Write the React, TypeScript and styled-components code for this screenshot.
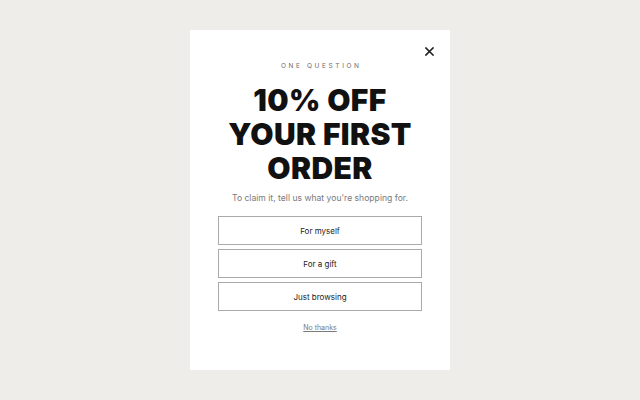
import styled, { createGlobalStyle } from 'styled-components';

const GlobalStyle = createGlobalStyle`
    html, body {
        margin: 0;
        padding: 0;
        background: #efedea;
        font-family: Inter, "Noto Sans", sans-serif;
    }
`

const Page = styled.div`
    width: 640px;
    height: 400px;
    display: flex;
    justify-content: center;
    align-items: center;
`

const Card = styled.div`
    position: relative;
    width: 260px;
    height: 340px;
    box-sizing: border-box;
    background: #ffffff;
    padding: 31px 28px 0;
    display: flex;
    flex-direction: column;
    align-items: center;
`

const Close = styled.button`
    position: absolute;
    top: 14px;
    right: 14px;
    width: 14px;
    height: 14px;
    padding: 0;
    border: none;
    background: none;
    display: flex;
    align-items: center;
    justify-content: center;
    cursor: pointer;
`

const Eyebrow = styled.div`
    font-size: 6.5px;
    line-height: 10px;
    letter-spacing: 2.6px;
    color: #6b6b6b;
    text-transform: uppercase;
    margin-right: -2.6px;
`

const Title = styled.h1`
    margin: 12px 0 0;
    font-family: Inter, "Liberation Sans", sans-serif;
    font-weight: 900;
    font-size: 30px;
    line-height: 34px;
    letter-spacing: 0.4px;
    color: #111111;
    text-align: center;
    text-transform: uppercase;
`

const Subtitle = styled.p`
    margin: 6px 0 0;
    font-size: 8.6px;
    line-height: 14px;
    color: #7a7a7a;
    white-space: nowrap;
`

const Options = styled.div`
    margin-top: 11px;
    width: 100%;
    display: flex;
    flex-direction: column;
    gap: 4px;
`

const Option = styled.button`
    width: 100%;
    height: 29px;
    box-sizing: border-box;
    border: 1px solid #aaaaaa;
    background: #ffffff;
    font-family: Inter, sans-serif;
    font-size: 8px;
    color: #222222;
    cursor: pointer;
`

const NoThanks = styled.a`
    margin-top: 12px;
    font-size: 7px;
    line-height: 10px;
    color: #7a7a7a;
    text-decoration: underline;
    cursor: pointer;
`

const options = ['For myself', 'For a gift', 'Just browsing'];

export default function App() {
    return (
        <Page>
            <GlobalStyle />
            <Card>
                <Close aria-label="Close">
                    <svg width="9" height="9" viewBox="0 0 9 9">
                        <path d="M1 1L8 8M8 1L1 8" stroke="#222" strokeWidth="1.6" strokeLinecap="square" />
                    </svg>
                </Close>

                <Eyebrow>One question</Eyebrow>

                <Title>10% off<br />your first<br />order</Title>

                <Subtitle>To claim it, tell us what you're shopping for.</Subtitle>

                <Options>
                    {options.map(o => <Option key={o}>{o}</Option>)}
                </Options>

                <NoThanks>No thanks</NoThanks>
            </Card>
        </Page>
    )
}
